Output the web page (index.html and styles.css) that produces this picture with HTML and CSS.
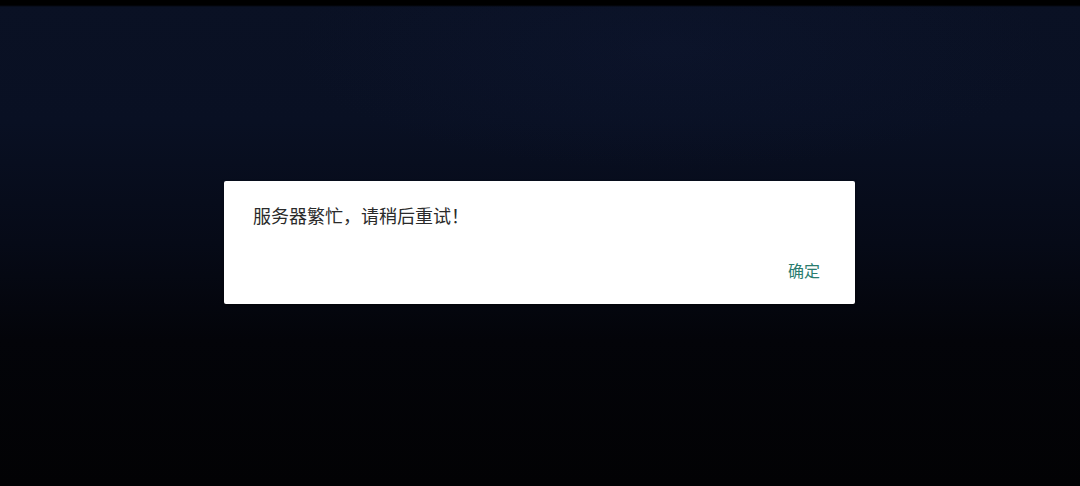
FILE: index.html
```html
<!DOCTYPE html>
<html lang="zh-CN">
<head>
    <meta charset="UTF-8">
    <meta name="viewport" content="width=device-width, initial-scale=1.0">
    <title>提示</title>
    <link rel="stylesheet" href="styles.css">
</head>
<body>
    <div class="screen">
        <div class="dialog">
            <p class="dialog-message">服务器繁忙，请稍后重试！</p>
            <div class="dialog-actions">
                <button class="dialog-btn">确定</button>
            </div>
        </div>
    </div>
</body>
</html>
```

FILE: styles.css
```css
html, body {
    margin: 0;
    padding: 0;
    height: 100%;
}
body {
    font-family: "Noto Sans CJK SC", "Noto Sans", sans-serif;
    background-color: #000;
}
.screen {
    height: 100%;
    display: flex;
    align-items: center;
    justify-content: center;
    background:
        linear-gradient(to bottom, #000 0, #000 5px, transparent 7px),
        radial-gradient(ellipse 35% 25% at 62% 10%, rgba(16, 26, 56, 0.3), transparent),
        linear-gradient(to bottom, #0a1124 0%, #091023 25%, #060a17 50%, #030409 70%, #020204 100%);
}
.dialog {
    width: 631px;
    margin: 0 1px 1px 0;
    background-color: #fff;
    border-radius: 2px;
    box-shadow: 0 1px 3px rgba(0, 0, 0, 0.5);
    display: flex;
    flex-direction: column;
}
.dialog-message {
    margin: 0;
    padding: 21px 29px 0;
    font-size: 18px;
    line-height: 26px;
    color: #2a2a2a;
}
.dialog-actions {
    display: flex;
    justify-content: flex-end;
    margin-top: 31px;
    padding: 0 27px 22px;
}
.dialog-btn {
    font-family: inherit;
    font-size: 16px;
    line-height: 23px;
    padding: 0 8px;
    border: none;
    background: none;
    color: #2b7d6f;
    cursor: pointer;
}
```
